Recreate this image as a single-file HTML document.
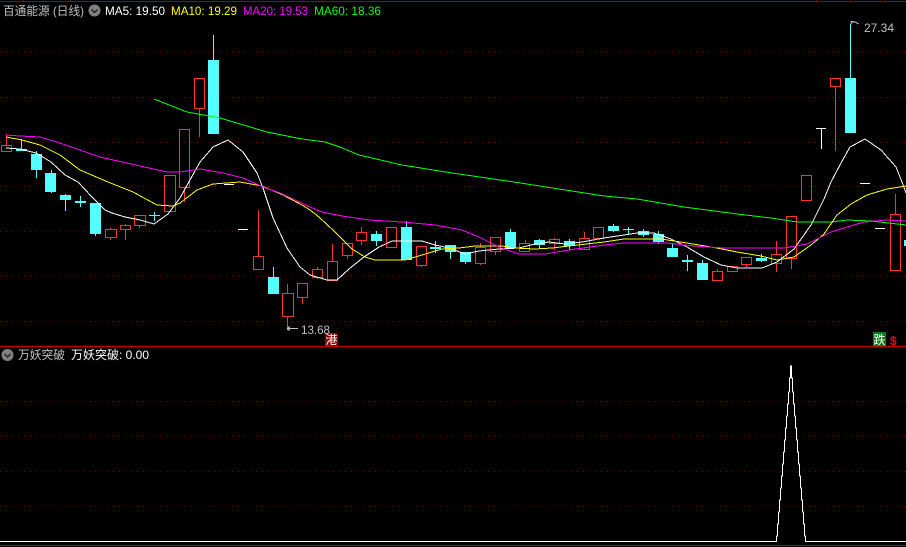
<!DOCTYPE html>
<html><head><meta charset="utf-8">
<style>
html,body{margin:0;padding:0;background:#000;width:906px;height:547px;overflow:hidden}
svg{display:block}
text{font-family:"Liberation Sans","Noto Sans CJK SC",sans-serif;font-size:12px}
</style></head>
<body>
<svg width="906" height="547" viewBox="0 0 906 547" xmlns="http://www.w3.org/2000/svg">
<rect width="906" height="547" fill="#000"/>
<g shape-rendering="crispEdges">
<rect x="0" y="1" width="906" height="1" fill="#a00000"/>
<rect x="816" y="0" width="1" height="1" fill="#a00000"/><rect x="850" y="0" width="1" height="1" fill="#a00000"/><rect x="885" y="0" width="1" height="1" fill="#a00000"/><rect x="23" y="0" width="1" height="1" fill="#a00000"/><rect x="70" y="0" width="1" height="1" fill="#a00000"/>
<path d="M0 52.5H906M0 97.5H906M0 142.5H906M0 186.5H906M0 231.5H906M0 276.5H906M0 321.5H906M0 401.5H906M0 436.5H906M0 471.5H906M0 506.5H906" stroke="#8c0000" stroke-width="1" stroke-dasharray="1 4.95" fill="none"/>
<rect x="0" y="346" width="906" height="1" fill="#c80000"/>
<rect x="0" y="545" width="906" height="1" fill="#a00000"/>

<!-- red candles -->
<path fill="none" stroke="#ff3232" stroke-width="1" d="
M6.5 134V145M1.5 145.5h10v6h-10z
M110.5 228V229M110.5 237V240M105.5 229.5h11v8h-11z
M125.5 224V225M125.5 229V240M120.5 225.5h10v4h-10z
M139.5 225V228M134.5 215.5h11v10h-11z
M164.5 175.5h11v36h-11z
M184.5 187V202M179.5 129.5h10v58h-10z
M199.5 108V137M194.5 78.5h10v30h-10z
M258.5 210V256M253.5 256.5h10v13h-10z
M287.5 284V293M287.5 316V329M282.5 293.5h11v23h-11z
M302.5 297V304M297.5 283.5h10v14h-10z
M317.5 267V269M317.5 277V279M312.5 269.5h10v8h-10z
M332.5 244V261M327.5 261.5h10v19h-10z
M347.5 255V259M342.5 243.5h10v12h-10z
M361.5 227V232M361.5 240V245M356.5 232.5h10v8h-10z
M386.5 227.5h10v20h-10z
M421.5 265V267M416.5 246.5h10v19h-10z
M480.5 243V247M480.5 263V265M475.5 247.5h10v16h-10z
M495.5 251V255M490.5 237.5h10v14h-10z
M525.5 240V243M525.5 251V252M519.5 243.5h10v8h-10z
M554.5 238V239M554.5 243V250M549.5 239.5h10v4h-10z
M584.5 232V238M579.5 238.5h10v11h-10z
M593.5 227.5h10v11h-10z
M717.5 269V271M717.5 280V281M712.5 271.5h10v9h-10z
M727.5 266.5h10v5h-10z
M746.5 264V267M741.5 257.5h10v7h-10z
M776.5 241V254M776.5 263V272M771.5 254.5h10v9h-10z
M791.5 258V269M786.5 216.5h10v42h-10z
M801.5 175.5h10v25h-10z
M835.5 86V151M830.5 78.5h10v8h-10z
M895.5 194V214M890.5 214.5h10v56h-10z"/>

<!-- cyan candles -->
<path fill="none" stroke="#54ffff" stroke-width="1" d="
M21.5 139V151M36.5 151V178M51.5 170V193M65.5 194V211M80.5 196V207M95.5 203V236M154.5 212V221M213.5 35V60M273.5 267V277M376.5 231V246M406.5 221V227M435.5 241V253M450.5 245V259M465.5 252V264M510.5 229V232M539.5 239V248M569.5 239V250M613.5 224V232M628.5 227V234M643.5 229V237M658.5 231V244M672.5 244V248M687.5 255V271M702.5 260V263M761.5 254V262M850.5 24V78"/>
<g fill="#54ffff">
<rect x="16" y="149" width="11" height="2"/><rect x="31" y="154" width="11" height="16"/><rect x="45" y="173" width="11" height="19"/><rect x="60" y="195" width="11" height="5"/><rect x="75" y="201" width="11" height="2"/><rect x="90" y="203" width="11" height="31"/><rect x="149" y="215" width="11" height="1"/><rect x="208" y="60" width="11" height="74"/><rect x="268" y="277" width="11" height="17"/><rect x="371" y="234" width="11" height="7"/><rect x="401" y="227" width="11" height="33"/><rect x="430" y="247" width="11" height="2"/><rect x="445" y="245" width="11" height="7"/><rect x="460" y="252" width="11" height="10"/><rect x="505" y="232" width="11" height="16"/><rect x="534" y="240" width="11" height="5"/><rect x="564" y="241" width="11" height="5"/><rect x="608" y="226" width="11" height="5"/><rect x="623" y="229" width="11" height="1"/><rect x="638" y="231" width="11" height="4"/><rect x="653" y="234" width="11" height="8"/><rect x="667" y="248" width="11" height="9"/><rect x="682" y="260" width="11" height="2"/><rect x="697" y="263" width="11" height="17"/><rect x="756" y="258" width="11" height="3"/><rect x="845" y="78" width="11" height="55"/><rect x="904" y="240" width="2" height="6"/>
</g>

<!-- white dashes -->
<path fill="none" stroke="#fff" stroke-width="1" d="M238 229.5H248M224 184.5H234M860 183.5H870M875 228.5H885M816 128.5H826M821.5 128V149"/>

<!-- MA lines -->
<polyline fill="none" stroke="#00ff00" stroke-width="1" points="154,99 187,112 220,118 267,132 302,139 325,142 340,147 359,155 402,165 452,173 514,182 604,196 637,199 684,207 737,214 771,218 797,222 831,222 847,220 871,221 906,225"/>
<polyline fill="none" stroke="#ffffff" stroke-width="1" points="6,148 20,149 36,153 51,162 65,175 78,182 92,197 105,210 112,213 125,217 140,220 154,224 168,214 180,198 190,180 200,162 213,147 228,140 243,152 257,173 263,188 273,218 287,248 300,267 310,275 327,280 337,280 349,269 364,257 379,247 392,241 422,241 435,245 449,248 465,254 479,251 499,249 519,248 535,244 549,242 565,244 582,242 604,238 624,235 637,233 654,233 671,239 687,247 704,257 721,265 737,268 762,268 777,262 794,249 811,225 824,199 831,182 841,163 850,147 865,139 881,150 896,167 902,182 906,193"/>
<polyline fill="none" stroke="#ffff00" stroke-width="1" points="6,137 22,140 40,145 60,155 80,170 108,182 133,192 157,205 173,206 180,203 197,190 213,184 240,182 262,186 283,195 302,205 310,210 319,217 335,232 352,249 365,257 375,260 405,260 422,255 442,249 459,248 475,246 502,246 515,248 535,249 552,248 569,246 604,242 624,239 661,239 687,243 717,248 737,252 761,256 777,260 794,257 811,245 824,234 837,215 851,204 867,195 887,189 906,186"/>
<polyline fill="none" stroke="#ff00ff" stroke-width="1" points="6,135 20,136 40,137 60,143 100,157 140,166 167,172 180,172 200,169 223,173 243,178 263,187 280,193 310,207 322,212 342,216 369,220 402,222 435,225 462,230 479,237 499,247 519,254 545,254 569,250 604,245 624,243 667,243 694,246 724,248 784,248 807,244 831,232 864,222 887,220 906,221"/>

<!-- price markers -->
<path fill="none" stroke="#c0c0c0" stroke-width="1" d="M287 328.5H298M287 328.5l3-2M287 328.5l3 2M850.5 21.5h3M850.5 24l2-2h3l3 2"/>
<rect x="287" y="328" width="2" height="2" fill="#c0c0c0"/>

<!-- lower panel -->
<path fill="none" stroke="#fff" stroke-width="1" d="M0 541.5H776.5V536H777.5V524H778.5V512H779.5V500H780.5V488H781.5V476H782.5V464H783.5V452H784.5V440H785.5V428H786.5V416H787.5V404H788.5V392H789.5V378H790.5V366H791.5V378H792.5V392H793.5V404H794.5V416H795.5V428H796.5V440H797.5V452H798.5V464H799.5V476H800.5V488H801.5V500H802.5V512H803.5V524H804.5V536H805.5V541.5H906"/>
<rect x="325" y="333" width="13" height="13" fill="#8c0000"/>
<rect x="873" y="332" width="13" height="14" fill="#0a7a14"/>
</g>

<!-- dropdown icons -->
<circle cx="94.5" cy="10.5" r="6" fill="#808080"/>
<path d="M91.5 9.5l3 3 3-3" fill="none" stroke="#1c1c1c" stroke-width="1.3"/>
<circle cx="7.5" cy="355" r="6" fill="#808080"/>
<path d="M4.5 354l3 3 3-3" fill="none" stroke="#1c1c1c" stroke-width="1.3"/>

<!-- text -->
<text x="3" y="15" fill="#c0c0c0" textLength="81" lengthAdjust="spacingAndGlyphs">百通能源 (日线)</text>
<text x="105" y="15" fill="#ffffff" textLength="60" lengthAdjust="spacingAndGlyphs">MA5: 19.50</text>
<text x="171" y="15" fill="#ffff00" textLength="66" lengthAdjust="spacingAndGlyphs">MA10: 19.29</text>
<text x="243" y="15" fill="#ff00ff" textLength="65" lengthAdjust="spacingAndGlyphs">MA20: 19.53</text>
<text x="314" y="15" fill="#00ff00" textLength="67" lengthAdjust="spacingAndGlyphs">MA60: 18.36</text>
<text x="864" y="32" fill="#c0c0c0" textLength="30" lengthAdjust="spacingAndGlyphs">27.34</text>
<text x="301" y="334" fill="#c0c0c0" textLength="29" lengthAdjust="spacingAndGlyphs">13.68</text>
<text x="325.5" y="344" fill="#ffffff" style="font-size:12px">港</text>
<text x="873.5" y="344" fill="#ffffff" style="font-size:12px">跌</text>
<text x="890" y="345" fill="#ff0000" style="font-size:12px;font-weight:bold">$</text>
<text x="18" y="359" fill="#c0c0c0" textLength="47" lengthAdjust="spacingAndGlyphs">万妖突破</text>
<text x="71" y="359" fill="#ffffff" textLength="78" lengthAdjust="spacingAndGlyphs">万妖突破: 0.00</text>
</svg>
</body></html>
